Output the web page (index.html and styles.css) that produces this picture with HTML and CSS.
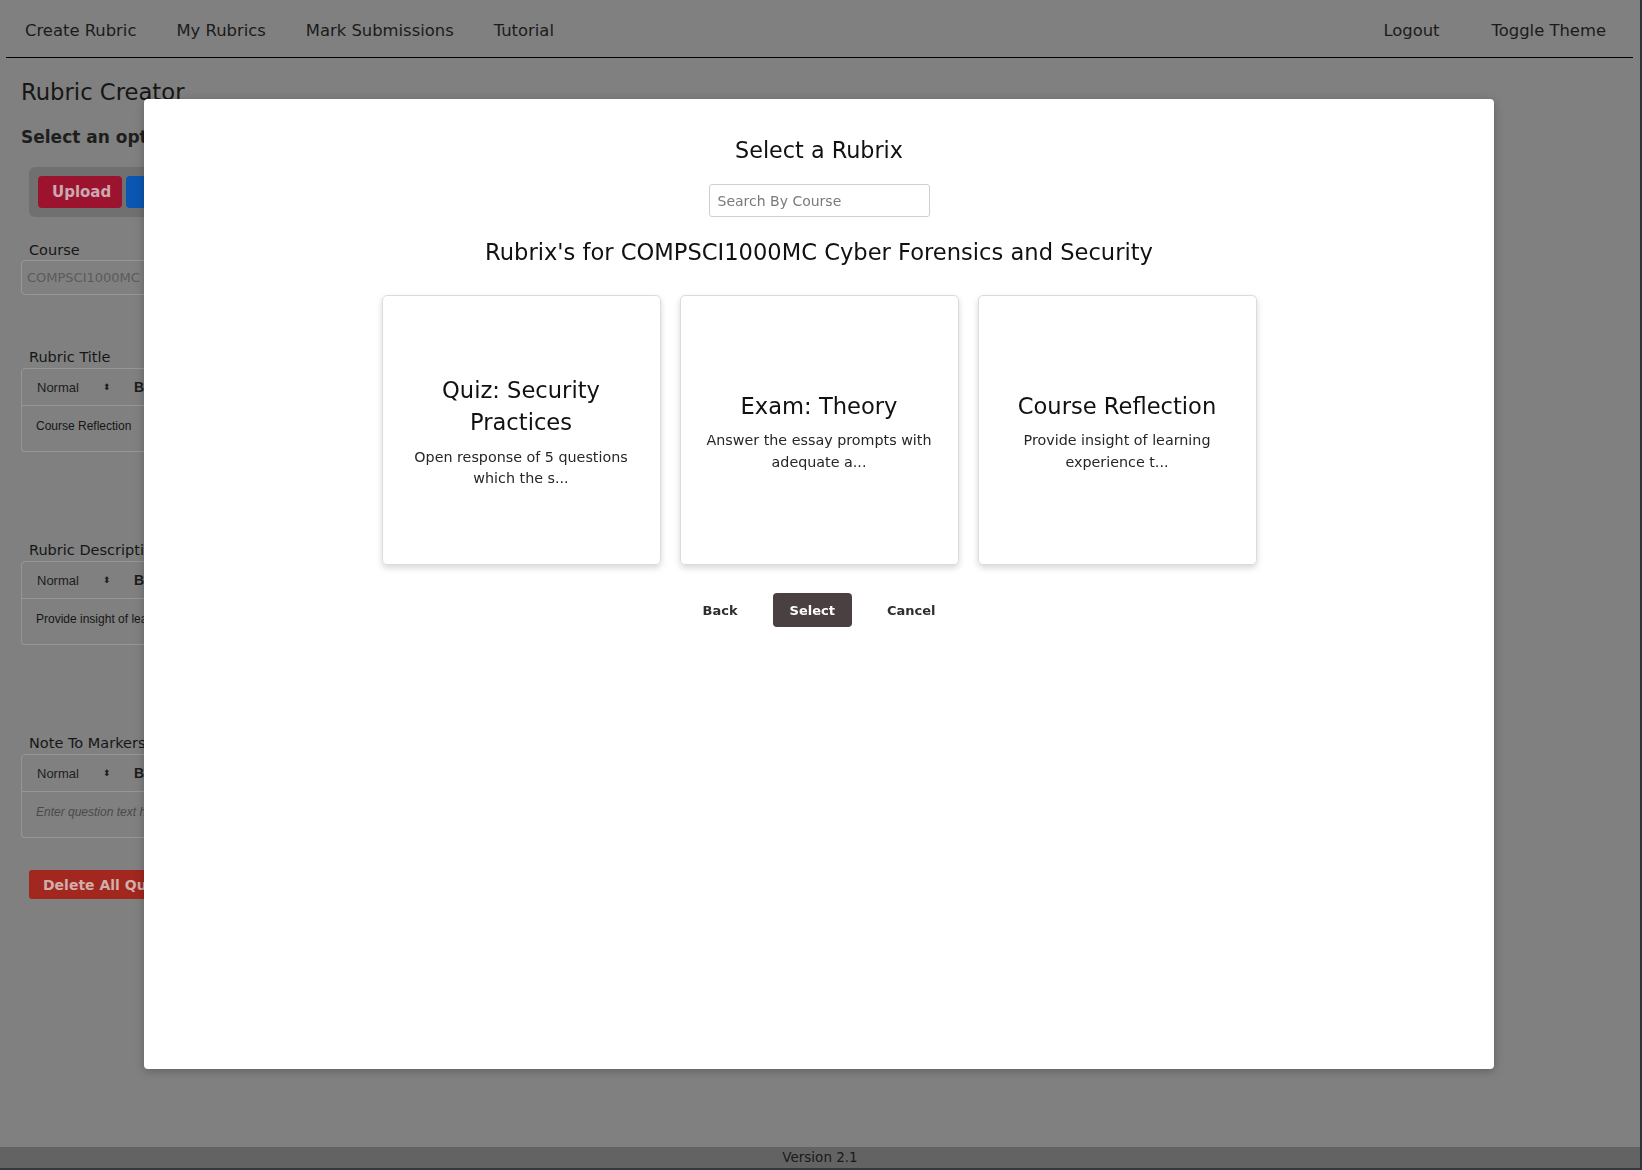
FILE: index.html
```html
<!DOCTYPE html>
<html lang="en">
<head>
<meta charset="utf-8">
<title>Rubric Creator</title>
<link rel="stylesheet" href="styles.css">
</head>
<body>
<div class="app">
  <div class="page">
    <nav class="topnav">
      <div class="nav-left">
        <a class="nav-link">Create Rubric</a>
        <a class="nav-link">My Rubrics</a>
        <a class="nav-link">Mark Submissions</a>
        <a class="nav-link">Tutorial</a>
      </div>
      <div class="nav-right">
        <a class="nav-link">Logout</a>
        <a class="nav-link">Toggle Theme</a>
      </div>
    </nav>

    <main class="creator">
      <h1 class="creator-title">Rubric Creator</h1>
      <h2 class="creator-sub">Select an option</h2>
      <div class="btn-group">
        <button class="bg-btn bg-upload">Upload</button>
        <button class="bg-btn bg-new">New</button>
      </div>

      <div class="field-label course-label">Course</div>
      <div class="course-input">COMPSCI1000MC Cyber Forensics and Security</div>

      <div class="editor first-editor">
        <div class="field-label">Rubric Title</div>
        <div class="toolbar"><span class="tb-select">Normal</span><span class="tb-arrows">&#x2B0D;</span><span class="tb-bold">B</span></div>
        <div class="editor-body">Course Reflection</div>
      </div>

      <div class="editor">
        <div class="field-label">Rubric Description</div>
        <div class="toolbar"><span class="tb-select">Normal</span><span class="tb-arrows">&#x2B0D;</span><span class="tb-bold">B</span></div>
        <div class="editor-body">Provide insight of learning experience throughout the course</div>
      </div>

      <div class="editor">
        <div class="field-label">Note To Markers</div>
        <div class="toolbar"><span class="tb-select">Normal</span><span class="tb-arrows">&#x2B0D;</span><span class="tb-bold">B</span></div>
        <div class="editor-body placeholder">Enter question text here...</div>
      </div>

      <button class="delete-btn">Delete All Questions</button>
    </main>

    <footer class="footer">Version 2.1</footer>
    <div class="bottom-strip"></div>
  </div>
  <div class="edge"></div>
</div>

<div class="modal">
  <h2 class="modal-title">Select a Rubrix</h2>
  <input class="search" type="text" placeholder="Search By Course">
  <h2 class="rubrix-heading">Rubrix's for COMPSCI1000MC Cyber Forensics and Security</h2>
  <div class="cards">
    <div class="card">
      <h3 class="card-title">Quiz: Security Practices</h3>
      <p class="card-desc">Open response of 5 questions which the s...</p>
    </div>
    <div class="card">
      <h3 class="card-title">Exam: Theory</h3>
      <p class="card-desc">Answer the essay prompts with adequate a...</p>
    </div>
    <div class="card">
      <h3 class="card-title">Course Reflection</h3>
      <p class="card-desc">Provide insight of learning experience t...</p>
    </div>
  </div>
  <div class="actions">
    <button class="act-btn act-text">Back</button>
    <button class="act-btn act-primary">Select</button>
    <button class="act-btn act-text">Cancel</button>
  </div>
</div>
</body>
</html>
```

FILE: styles.css
```css
* { box-sizing: border-box; }

html, body {
  margin: 0;
  padding: 0;
}

body {
  width: 1642px;
  height: 1170px;
  overflow: hidden;
  font-family: "DejaVu Sans", "Open Sans", sans-serif;
  background: #2a3038;
  color: #1a1a1a;
}

.app {
  display: flex;
  height: 1170px;
}

.page {
  width: 1640px;
  height: 1170px;
  background: #808080;
  display: flex;
  flex-direction: column;
  overflow: hidden;
}

.edge {
  width: 2px;
  background: #2c333c;
}

/* top navigation */
.topnav {
  height: 58px;
  margin: 0 7px 0 6px;
  padding: 3px 27px 0 19px;
  border-bottom: 1px solid #000;
  display: flex;
  align-items: center;
  justify-content: space-between;
  font-size: 16.4px;
}

.nav-left {
  display: flex;
  gap: 40px;
}

.nav-right {
  display: flex;
  gap: 52px;
}

.nav-link {
  color: #1c1a1a;
  white-space: nowrap;
}

/* background form */
.creator {
  flex: 1;
  padding-left: 21px;
}

.creator-title {
  margin: 19px 0 0;
  font-size: 22.7px;
  line-height: 30px;
  font-weight: normal;
  color: #161616;
}

.creator-sub {
  margin: 18px 0 0;
  font-size: 17px;
  line-height: 24px;
  font-weight: bold;
  color: #1e1e1e;
}

.btn-group {
  margin: 18px 0 0 8px;
  width: 300px;
  height: 50px;
  padding: 9px;
  background: #707070;
  border-radius: 6px;
  display: flex;
  gap: 4px;
}

.bg-btn {
  height: 32px;
  border: none;
  border-radius: 4px;
  font-family: "DejaVu Sans", sans-serif;
  font-size: 15px;
  font-weight: bold;
  color: #c9aab1;
  padding: 0 14px;
}

.bg-upload {
  width: 84px;
  background: #9c1330;
}

.bg-new {
  width: 84px;
  background: #0b56b3;
  color: #a9b9d2;
}

.field-label {
  font-size: 14.5px;
  line-height: 20px;
  margin-left: 8px;
  color: #161616;
}

.course-label {
  margin-top: 23px;
}

.course-input {
  width: 700px;
  height: 35px;
  border: 1px solid #979797;
  border-radius: 4px;
  padding: 0 5px;
  font-size: 13px;
  line-height: 33px;
  color: #5b5b5b;
}

.editor {
  margin-top: 88px;
  width: 700px;
}

.first-editor {
  margin-top: 52px;
}

.editor .field-label {
  margin-bottom: 1px;
}

.toolbar {
  height: 38px;
  border: 1px solid #969696;
  border-radius: 4px 4px 0 0;
  display: flex;
  align-items: center;
  padding-left: 15px;
  font-family: "Liberation Sans", Arial, sans-serif;
  font-size: 13px;
  color: #1d1d1d;
}

.tb-select {
  width: 66px;
}

.tb-arrows {
  width: 31px;
  font-size: 9px;
}

.tb-bold {
  font-weight: bold;
  font-size: 14px;
}

.editor-body {
  height: 46px;
  border: 1px solid #969696;
  border-top: none;
  border-radius: 0 0 4px 4px;
  padding: 12px 14px 0;
  font-family: "Liberation Sans", Arial, sans-serif;
  font-size: 12px;
  line-height: 16px;
  color: #161616;
}

.editor-body.placeholder {
  font-style: italic;
  color: #4a4a4a;
}

.delete-btn {
  margin: 32px 0 0 8px;
  height: 29px;
  width: 240px;
  border: none;
  border-radius: 3px;
  background: #a1271f;
  color: #d0aea9;
  font-family: "DejaVu Sans", sans-serif;
  font-size: 14px;
  font-weight: bold;
  text-align: left;
  padding: 0 14px;
}

.footer {
  height: 21px;
  background: #636363;
  text-align: center;
  font-size: 13.5px;
  line-height: 21px;
  color: #1a1a1a;
}

.bottom-strip {
  height: 2px;
  background: #34373e;
}

/* modal */
.modal {
  position: fixed;
  left: 144px;
  top: 99px;
  width: 1350px;
  height: 970px;
  background: #fff;
  border-radius: 4px;
  box-shadow: 0 2px 10px rgba(0, 0, 0, 0.25);
  padding-top: 35px;
  display: flex;
  flex-direction: column;
  align-items: center;
  color: #111;
}

.modal-title {
  margin: 0;
  font-size: 22.3px;
  line-height: 33px;
  font-weight: normal;
}

.search {
  margin-top: 17px;
  width: 221px;
  height: 33px;
  border: 1px solid #cfcfcf;
  border-radius: 3px;
  padding: 0 8px;
  font-family: "DejaVu Sans", sans-serif;
  font-size: 14px;
  color: #333;
  outline: none;
}

.search::placeholder {
  color: #7a7a7a;
}

.rubrix-heading {
  margin: 19px 0 0;
  font-size: 22.6px;
  line-height: 33px;
  font-weight: normal;
}

.cards {
  margin-top: 26px;
  display: flex;
  gap: 19px;
}

.card {
  width: 279px;
  height: 270px;
  border: 1px solid #dcdcdc;
  border-radius: 5px;
  box-shadow: 0 3px 6px rgba(0, 0, 0, 0.16);
  display: flex;
  flex-direction: column;
  justify-content: center;
  align-items: center;
  text-align: center;
  padding: 3px 20px 0;
}

.card-title {
  margin: 0 0 8px;
  font-size: 22.6px;
  line-height: 32.5px;
  font-weight: normal;
  color: #111;
}

.card-desc {
  margin: 0;
  font-size: 14.3px;
  line-height: 21.5px;
  color: #262626;
}

.actions {
  margin-top: 28px;
  display: flex;
  gap: 18px;
}

.act-btn {
  height: 34px;
  padding: 0 17px;
  border: none;
  border-radius: 4px;
  font-family: "DejaVu Sans", sans-serif;
  font-size: 13px;
  font-weight: bold;
  cursor: pointer;
}

.act-text {
  background: transparent;
  color: #2e2e2e;
}

.act-primary {
  background: #4a4042;
  color: #fff;
}
```
